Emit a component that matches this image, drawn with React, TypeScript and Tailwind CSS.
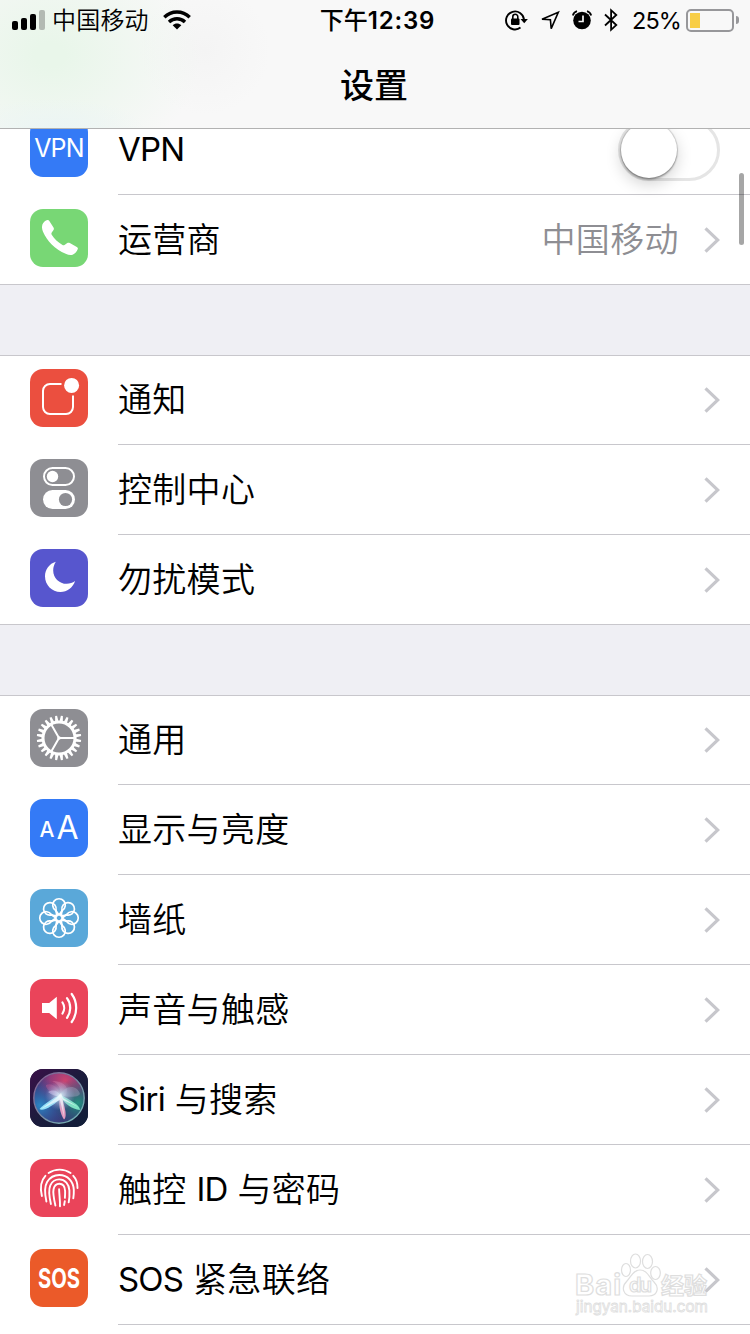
import type { ReactNode } from "react";

interface SettingItem {
  label: string;
  icon: ReactNode;
  color: string;
  value?: string;
  toggle?: boolean;
}

const petals = [0, 45, 90, 135, 180, 225, 270, 315];
const teeth = Array.from({ length: 24 }, (_, i) => i * 15);

function PhoneIcon() {
  return (
    <svg viewBox="0 0 58 58" className="size-full" fill="#fff">
      <path d="M12.4 15.6c.8-2.4 3.2-4.300 5-4.600 1-.1 1.500.3 2.100 1.200l4 6.400c.6 1 .5 1.700 0 2.500l-1.900 2.700c-.4.700-.3 1.300.1 2 2.700 4.300 6.200 7.600 10.800 10.200.8.4 1.400.3 2-.1l2.800-1.900c.8-.5 1.600-.5 2.500 0l7 3.900c1 .6 1.300 1.200 1 2.200-.8 2.600-2.900 4.900-5.200 5.600-2 .6-4.200.3-6.900-.9C25 40.300 16.700 31.500 13 22.700c-1.100-2.700-1.300-4.900-.6-7.100z" />
    </svg>
  );
}

function NotificationIcon() {
  return (
    <svg viewBox="0 0 58 58" className="size-full" fill="none">
      <path d="M31.500 15H20a7 7 0 0 0-7 7v16a7 7 0 0 0 7 7h16a7 7 0 0 0 7-7V26.500" stroke="#fff" strokeWidth="2" />
      <circle cx="41.600" cy="16.400" r="7.500" fill="#fff" />
    </svg>
  );
}

function ControlIcon() {
  return (
    <svg viewBox="0 0 58 58" className="size-full">
      <rect x="14" y="9" width="30" height="17" rx="8.500" fill="none" stroke="#fff" strokeWidth="2" />
      <circle cx="22.500" cy="17.500" r="5.700" fill="#fff" />
      <rect x="13" y="31" width="32" height="19" rx="9.500" fill="#fff" />
      <circle cx="35.500" cy="40.500" r="6.600" fill="#8e8e93" />
    </svg>
  );
}

function MoonIcon() {
  return (
    <svg viewBox="0 0 58 58" className="size-full" fill="#fff">
      <path d="M25.800 12.800C19.300 14.700 15 20.600 15 27.200 15 35.900 21.900 43 30.500 43c6.600 0 12.300-4.200 14.600-10.900-2.500 1.800-5.300 2.700-8.300 2.700-7.700 0-13.600-6-13.600-13.400 0-3 .9-6 2.600-8.600z" />
    </svg>
  );
}

function GearIcon() {
  return (
    <svg viewBox="0 0 58 58" className="size-full" fill="none" stroke="#fff">
      <circle cx="29" cy="29" r="16" strokeWidth="3" />
      {teeth.map((angle) => (
        <path key={angle} d="M27.300 12.500 28 6.800h2l.7 5.700z" fill="#fff" stroke="none" transform={`rotate(${angle + 7.5} 29 29)`} />
      ))}
      <path d="M29 29h16M29 29l-8-13.900M29 29l-8 13.900" strokeWidth="2" />
      <circle cx="29" cy="29" r="1.800" fill="#fff" stroke="none" />
    </svg>
  );
}

function FlowerIcon() {
  return (
    <svg viewBox="0 0 58 58" className="size-full" fill="none" stroke="#fff" strokeWidth="1.700">
      {petals.map((angle) => (
        <g key={angle} transform={`rotate(${angle} 29 29)`}>
          <path d="M25.500 21.300a6.300 6.300 0 1 1 7 0L29 25.800z" />
          <path d="M29 25.500V19.800" transform="rotate(22.500 29 29)" />
        </g>
      ))}
      <circle cx="29" cy="29" r="3.300" />
    </svg>
  );
}

function SoundIcon() {
  return (
    <svg viewBox="0 0 58 58" className="size-full" fill="none" stroke="#fff" strokeWidth="2.200" strokeLinecap="round">
      <path d="M12 24h7.200l7.600-6.300v22.600L19.200 34H12z" fill="#fff" stroke="none" />
      <path d="M32.500 23.500c2.200 3.200 2.200 7.800 0 11M37 19.200c4.300 5.700 4.300 13.900 0 19.600M41.700 15c6 8.300 6 19.700 0 28" />
    </svg>
  );
}

function SiriIcon() {
  return (
    <svg viewBox="0 0 58 58" className="size-full">
      <defs>
        <linearGradient id="siriBack" x1="0" y1="0" x2="1" y2="1">
          <stop offset="0" stopColor="#3a1048" />
          <stop offset=".5" stopColor="#1b1b3c" />
          <stop offset="1" stopColor="#101e38" />
        </linearGradient>
        <radialGradient id="siriPink" cx=".62" cy=".15" r=".6">
          <stop offset="0" stopColor="#cc4470" />
          <stop offset=".5" stopColor="#a63c7c" stopOpacity=".8" />
          <stop offset="1" stopColor="#a02c78" stopOpacity="0" />
        </radialGradient>
        <radialGradient id="siriBlue" cx=".12" cy=".65" r=".55">
          <stop offset="0" stopColor="#2b86c4" />
          <stop offset="1" stopColor="#2b58a4" stopOpacity="0" />
        </radialGradient>
        <radialGradient id="siriTeal" cx=".88" cy=".6" r=".5">
          <stop offset="0" stopColor="#23917f" />
          <stop offset="1" stopColor="#1d6070" stopOpacity="0" />
        </radialGradient>
        <radialGradient id="siriGlow" cx=".52" cy=".45" r=".3">
          <stop offset="0" stopColor="#dffcff" stopOpacity=".9" />
          <stop offset="1" stopColor="#8cb6e8" stopOpacity="0" />
        </radialGradient>
        <linearGradient id="siriRing" x1="0" y1="0" x2="1" y2="1">
          <stop offset="0" stopColor="#84588f" />
          <stop offset="1" stopColor="#70bcb9" />
        </linearGradient>
      </defs>
      <rect width="58" height="58" fill="url(#siriBack)" />
      <circle cx="29" cy="29" r="25" fill="#3a3a78" />
      <circle cx="29" cy="29" r="25" fill="url(#siriPink)" />
      <circle cx="29" cy="29" r="25" fill="url(#siriBlue)" />
      <circle cx="29" cy="29" r="25" fill="url(#siriTeal)" />
      <path d="M30 28C22 26 15 19 16 16c6-3 14 3 14 12z" fill="#e0669c" opacity=".3" />
      <path d="M30 28c2-8-2-14-8-16 12 0 19 7 13 15z" fill="#f4a0c8" opacity=".25" />
      <path d="M30 27c4-11 17-12 20-2-3 5-13 1-20 3z" fill="#9fa0bd" opacity=".45" />
      <path d="M31 26C24 28 14 35 9.500 40c3 3 16-4 22-12z" fill="#9decff" opacity=".9" />
      <path d="M30 26c-2 8 0 19 4 24.500 4-3 0-17-4-24.500z" fill="#ffa8cb" opacity=".85" />
      <path d="M30 26c4 9 12 14 20 15 0-5-11-11-20-15z" fill="#8df5d0" opacity=".85" />
      <path d="M18 23c6-3 10-1 13 4-5 1-9-1-13-4z" fill="#e0c5f1" opacity=".5" />
      <circle cx="29" cy="29" r="25" fill="url(#siriGlow)" />
      <path d="m11 40 15-11 5-5 2 5 15 9-15-7 1 17-4-17z" fill="#fff" opacity=".6" />
      <circle cx="29" cy="29" r="25.200" fill="none" stroke="url(#siriRing)" strokeWidth="1.400" />
    </svg>
  );
}

function FingerprintIcon() {
  return (
    <svg viewBox="0 0 58 58" className="size-full" fill="none" stroke="#fff" strokeWidth="1.900" strokeLinecap="round">
      <path d="M18.600 14c6.700-4.500 15.400-4.500 22 0" />
      <path d="M15.400 16.800c-4.300 4.500-5.600 11.200-3.500 20.200M43.300 16.800c3 3.200 4.300 7.200 4.200 12.200" />
      <path d="M16.400 42.500c-1.700-7.800-2-15 .7-19.500 2.700-4.400 7.200-7 12.200-7 8.500 0 14.200 6.500 14.500 14.900.1 3.200-.1 6-.5 8.500" />
      <path d="M20.900 45c-1.600-7-2.400-14.500-.6-18.600 1.600-3.600 5-6 9-6 5.800 0 9.800 4.800 10.100 11 .2 4 0 8.800-.7 12" />
      <path d="M25.400 46.500c-1.600-6.900-2.600-13-1.800-16.500.7-3.300 2.900-5.300 5.700-5.300 3.500 0 5.600 3.100 5.800 7.300.1 2.600 0 4.600-.2 6.800M34.800 42.300l-.7 3.700" />
      <path d="M30 47.200c.1-6.200-.7-11-.9-17" />
    </svg>
  );
}

const groups: SettingItem[][] = [
  [
    {
      label: "VPN",
      color: "bg-[#347af6]",
      icon: <span className="pt-0.5 text-[25px] tracking-[-0.8px]">VPN</span>,
      toggle: true,
    },
    { label: "运营商", color: "bg-[#78d775]", icon: <PhoneIcon />, value: "中国移动" },
  ],
  [
    { label: "通知", color: "bg-[#eb4f3f]", icon: <NotificationIcon /> },
    { label: "控制中心", color: "bg-[#8e8e93]", icon: <ControlIcon /> },
    { label: "勿扰模式", color: "bg-[#5756ce]", icon: <MoonIcon /> },
  ],
  [
    { label: "通用", color: "bg-[#8e8e93]", icon: <GearIcon /> },
    {
      label: "显示与亮度",
      color: "bg-[#347af6]",
      icon: (
        <span className="flex items-center gap-0.5">
          <span className="pt-0.5 text-[21px] font-medium leading-none">A</span>
          <span className="text-[32px] leading-none">A</span>
        </span>
      ),
    },
    { label: "墙纸", color: "bg-[#5aa8d9]", icon: <FlowerIcon /> },
    { label: "声音与触感", color: "bg-[#ea445a]", icon: <SoundIcon /> },
    { label: "Siri 与搜索", color: "bg-[#1b1b3c]", icon: <SiriIcon /> },
    { label: "触控 ID 与密码", color: "bg-[#ea445a]", icon: <FingerprintIcon /> },
    {
      label: "SOS 紧急联络",
      color: "bg-[#eb5a29]",
      icon: (
        <svg viewBox="0 0 58 58" className="size-full" fill="#fff">
          <text fontSize="27" fontWeight="700" transform="translate(8 38.800) scale(.75 1)">SOS</text>
        </svg>
      ),
    },
  ],
];

function Chevron() {
  return (
    <svg viewBox="0 0 16 28" className="h-7 w-4" fill="none" stroke="#c7c7cc" strokeWidth="3.200">
      <path d="M1.500 2.300 13.800 14 1.500 25.700" />
    </svg>
  );
}

function Toggle() {
  return (
    <div className="h-[62px] w-[102px] rounded-full border-[3px] border-[#e5e5e5] bg-white">
      <div className="size-14 rounded-full bg-white shadow-[0_0_1px_1px_rgba(0,0,0,0.15),0_2px_2px_rgba(0,0,0,0.25),0_6px_16px_rgba(0,0,0,0.18)]" />
    </div>
  );
}

// Latin runs are set slightly smaller and tighter than the Chinese ones
function Label({ text }: { text: string }) {
  return (
    <span className="whitespace-pre text-[34px] font-[350] leading-none tracking-[0.3px] text-black">
      {text.split(/([A-Za-z]+)/).map((part, i) =>
        /[A-Za-z]/.test(part) ? (
          <span key={i} className="relative -top-px text-[33px] font-normal tracking-[-0.8px]">{part}</span>
        ) : (
          part
        )
      )}
    </span>
  );
}

function Row({ item, last }: { item: SettingItem; last: boolean }) {
  return (
    <div className="flex h-[90px] pl-[30px]">
      <div className={`mt-3.5 flex size-[58px] shrink-0 items-center justify-center overflow-hidden rounded-[13px] text-white ${item.color}`}>
        {item.icon}
      </div>
      <div className={`ml-[30px] flex flex-1 items-center justify-between pr-[30px] ${last ? "" : "border-b border-[#c8c7cc]"}`}>
        <Label text={item.label} />
        {item.toggle ? (
          <Toggle />
        ) : (
          <div className="flex items-center gap-[25px]">
            {item.value && <span className="text-[34px] font-[350] leading-none tracking-[0.4px] text-[#8e8e93]">{item.value}</span>}
            <Chevron />
          </div>
        )}
      </div>
    </div>
  );
}

function StatusBar() {
  return (
    <div className="flex h-10 items-center text-[24px] leading-none text-black">
      <div className="flex flex-1 items-center pl-3">
        <div className="flex h-5 items-end gap-[3px]">
          <div className="h-[9px] w-1.5 rounded-[2px] bg-black" />
          <div className="h-3 w-1.5 rounded-[2px] bg-black" />
          <div className="h-4 w-1.5 rounded-[2px] bg-black" />
          <div className="h-5 w-1.5 rounded-[2px] bg-[#b3bab3]" />
        </div>
        <span className="ml-[7px] pt-0.5 font-[350] tracking-[0.2px]">中国移动</span>
        <svg viewBox="0 0 28 20" className="ml-3.5 h-5 w-7" fill="none" stroke="#000" strokeWidth="3.400">
          <path d="M1.300 7.200C8.400.2 19.600.2 26.700 7.200M6 12c4.500-4.300 11.500-4.300 16 0" />
          <path d="M9.700 15.200c2.400-2.200 6.200-2.200 8.600 0L14 19.600z" fill="#000" stroke="none" />
        </svg>
      </div>
      <div className="pl-1 pt-0.5 font-medium">
        下午<span className="font-semibold tracking-[0.8px]">12:39</span>
      </div>
      <div className="flex flex-1 items-center justify-end pr-[11px]">
        <svg viewBox="0 0 23 22" className="h-[22px] w-[23px]" fill="none" stroke="#000" strokeWidth="1.900">
          <path d="M15.500 18.600A9 9 0 1 1 19 10.500" />
          <path d="m15.500 10 3.700 4.200 3.700-4.200z" fill="#000" stroke="none" />
          <rect x="6" y="9.500" width="8.500" height="6.500" rx="1" fill="#000" stroke="none" />
          <path d="M7.800 10V7.800a2.500 2.500 0 0 1 5 0V10" strokeWidth="1.600" />
        </svg>
        <svg viewBox="0 0 20 20" className="ml-3 size-5 overflow-visible" fill="none" stroke="#000" strokeWidth="1.600">
          <path d="M2 9.300 18.300 2.300 11.200 18.600l-.8-8.900z" strokeLinejoin="miter" />
        </svg>
        <svg viewBox="0 0 20 20" className="ml-3 size-5">
          <circle cx="10" cy="10.500" r="8.800" />
          <path d="M.8 5.500C1.500 3.300 3 1.800 5 1.200M19.200 5.500C18.500 3.300 17 1.800 15 1.200" stroke="#000" strokeWidth="1.800" fill="none" />
          <path d="M11 5.500v6H6.500" stroke="#f8f8f8" strokeWidth="1.700" fill="none" />
        </svg>
        <svg viewBox="0 0 14 24" className="ml-3 h-6 w-3.5" fill="none" stroke="#000" strokeWidth="1.800">
          <path d="M1 6.500 12.300 17 7.100 21.800V2.200l5.200 4.800L1 17.500" />
        </svg>
        <span className="ml-3.5 w-[50px] whitespace-nowrap pt-0.5 text-[23.500px] tracking-[-0.9px]">25%</span>
        <div className="ml-1 flex h-[23px] w-12 items-center rounded-[5px] border-2 border-[#97979a] pl-0.5">
          <div className="h-[15px] w-2.5 bg-[#f8ce46]" />
        </div>
        <div className="ml-0.5 h-2 w-[3px] rounded-r-full bg-[#97979a]" />
      </div>
    </div>
  );
}

function Watermark() {
  return (
    <svg viewBox="0 0 140 68" className="absolute left-[572px] top-[1250px] h-[68px] w-[140px]" fill="#fff" fillOpacity=".7" stroke="#dedede" strokeWidth="1.200">
      <text x="3" y="45" fontSize="29" fontWeight="700" textLength="46">Bai</text>
      <ellipse cx="54" cy="20" rx="4.500" ry="6.500" />
      <ellipse cx="63.500" cy="11" rx="5" ry="7" />
      <ellipse cx="75.500" cy="11.500" rx="5" ry="7" />
      <ellipse cx="83.500" cy="23" rx="4.800" ry="6.500" />
      <path d="M68 20c-7 0-9 7-13 11-7 7-3 15 5 15h17c8 0 11-8 5-14-5-5-7-12-14-12z" />
      <text x="57" y="42" fontSize="20" fontWeight="600" textLength="23">du</text>
      <text x="89" y="44" fontSize="23" fontWeight="700" textLength="46">经验</text>
      <text x="4" y="62" fontSize="15" textLength="132" lengthAdjust="spacingAndGlyphs" strokeWidth=".8">jingyan.baidu.com</text>
    </svg>
  );
}

export default function App() {
  return (
    <div className="relative h-[1334px] w-[750px] overflow-hidden bg-white font-['Inter','Noto_Sans_CJK_SC',sans-serif]">
      <header className="relative z-10 h-[129px] border-b border-[#b2b2b2] bg-[#f8f8f8] bg-[radial-gradient(ellipse_90px_30px_at_55px_128px,#ebf5f4,transparent),radial-gradient(ellipse_150px_120px_at_50px_55px,#e9f6ea_10%,transparent),radial-gradient(circle_at_205px_50px,#f4f4f4,transparent_65px)]">
        <StatusBar />
        <h1 className="pr-0.5 pt-[29px] text-center text-[34px] font-medium leading-none text-black">设置</h1>
      </header>
      <main className="-mt-6">
        {groups.map((group, i) => (
          <section key={i}>
            {i > 0 && <div className="h-[71px] border-b border-[#c8c7cc] bg-[#efeff4]" />}
            <div className={i > 0 ? "-mt-px" : ""}>
              {group.map((item, j) => (
                <Row key={item.label} item={item} last={i < 2 && j === group.length - 1} />
              ))}
            </div>
            {i < 2 && <div className="-mt-px h-px bg-[#c8c7cc]" />}
          </section>
        ))}
      </main>
      <div className="absolute left-[739px] top-[173px] h-[72px] w-[5px] rounded-full bg-black/35" />
      <Watermark />
    </div>
  );
}
